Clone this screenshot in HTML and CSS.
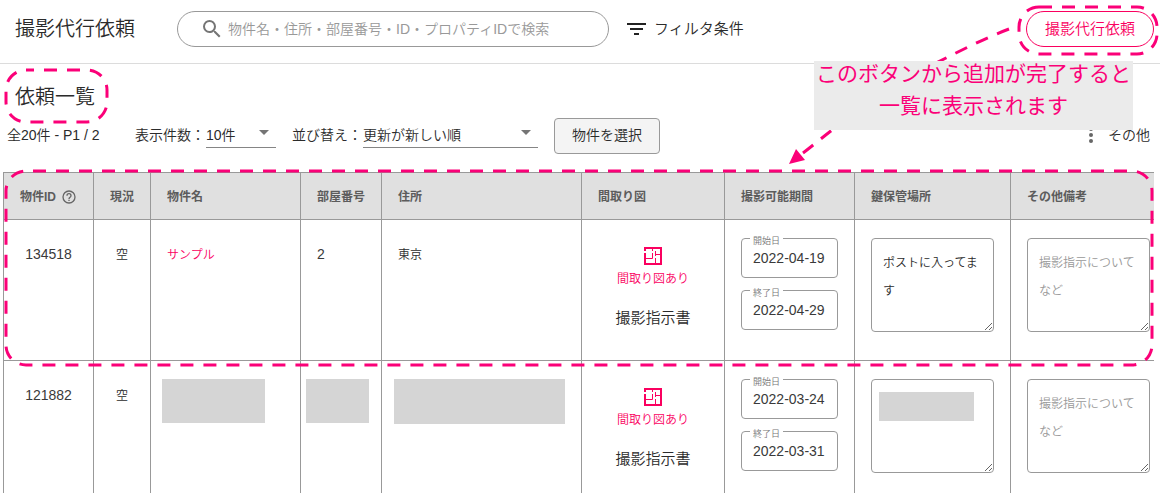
FILE: index.html
```html
<!DOCTYPE html>
<html lang="ja">
<head>
<meta charset="utf-8">
<meta name="viewport" content="width=device-width, initial-scale=1">
<title>撮影代行依頼</title>
<link rel="stylesheet" href="styles.css">
</head>
<body>
<div class="page">
  <header class="topbar">
    <h1 class="title">撮影代行依頼</h1>
    <div class="search">
      <svg class="search-icon" viewBox="0 0 24 24" aria-hidden="true"><path d="M15.5 14h-.79l-.28-.27A6.47 6.47 0 0 0 16 9.5 6.5 6.5 0 1 0 9.500 16c1.610 0 3.090-.59 4.230-1.570l.27.28v.79l5 4.990L20.490 19l-4.990-5zm-6 0C7.010 14 5 11.990 5 9.500S7.010 5 9.500 5 14 7.010 14 9.500 11.990 14 9.500 14z"/></svg>
      <input class="search-input" type="text" aria-label="検索" placeholder="物件名・住所・部屋番号・ID・プロパティIDで検索">
    </div>
    <button class="filter" type="button">
      <svg class="filter-icon" viewBox="0 0 20 12" aria-hidden="true"><path d="M0 0h19v2H0zM3 5h13v2H3zM7 10h5v2H7z"/></svg>
      フィルタ条件
    </button>
    <div class="request">
      <button class="request-button" type="button">撮影代行依頼</button>
      <svg class="frame frame-request" aria-hidden="true"><rect width="100%" height="100%" rx="20"/></svg>
    </div>
  </header>

  <main>
    <div class="heading">
      <h2 class="subtitle">依頼一覧</h2>
      <svg class="frame frame-heading" aria-hidden="true"><rect width="100%" height="100%" rx="20"/></svg>
    </div>

    <div class="toolbar">
      <span class="count">全20件 - P1 / 2</span>
      <div class="picker">
        <label for="per-page">表示件数：</label>
        <span class="select-wrap">
          <select id="per-page" class="select select-short"><option>10件</option></select>
          <svg class="caret" viewBox="0 0 10 5" aria-hidden="true"><path d="M0 0h10L5 5z"/></svg>
        </span>
      </div>
      <div class="picker">
        <label for="sort">並び替え：</label>
        <span class="select-wrap">
          <select id="sort" class="select select-long"><option>更新が新しい順</option></select>
          <svg class="caret" viewBox="0 0 10 5" aria-hidden="true"><path d="M0 0h10L5 5z"/></svg>
        </span>
      </div>
      <button class="choose" type="button">物件を選択</button>
      <button class="more" type="button">
        <svg class="dots" viewBox="0 0 4 16" aria-hidden="true"><circle cx="2" cy="2" r="2"/><circle cx="2" cy="8" r="2"/><circle cx="2" cy="14" r="2"/></svg>
        その他
      </button>
    </div>

    <div class="table-wrap">
      <table class="list">
        <colgroup>
          <col class="c-id"><col class="c-state"><col class="c-name"><col class="c-room"><col class="c-address"><col class="c-plan"><col class="c-period"><col class="c-key"><col class="c-note">
        </colgroup>
        <thead>
          <tr>
            <th><span class="id-head">物件ID <svg class="help" viewBox="0 0 24 24" aria-hidden="true"><path d="M11 18h2v-2h-2v2zm1-16a10 10 0 1 0 0 20 10 10 0 0 0 0-20zm0 18a8 8 0 1 1 0-16 8 8 0 0 1 0 16zm0-14a4 4 0 0 0-4 4h2a2 2 0 1 1 4 0c0 2-3 1.750-3 5h2c0-2.250 3-2.500 3-5a4 4 0 0 0-4-4z"/></svg></span></th>
            <th>現況</th><th>物件名</th><th>部屋番号</th><th>住所</th><th>間取り図</th><th>撮影可能期間</th><th>鍵保管場所</th><th>その他備考</th>
          </tr>
        </thead>
        <tbody>
          <tr>
            <td class="center number">134518</td>
            <td class="center">空</td>
            <td><a class="link" href="#sample">サンプル</a></td>
            <td class="number">2</td>
            <td>東京</td>
            <td class="plan">
              <a class="plan-link" href="#plan-1">
                <svg class="plan-icon" viewBox="0 0 18 18" aria-hidden="true"><path class="wall" d="M1 4V1h16v16H1V6"/><path class="room" d="M8.500 2v2M8.500 6v5.500H2M11.500 4v5M11.500 7.500H16M11.500 11v5"/></svg>
                間取り図あり
              </a>
              <button class="sheet" type="button">撮影指示書</button>
            </td>
            <td class="controls">
              <div class="period">
                <div class="field"><label for="start-1">開始日</label><input id="start-1" type="text" value="2022-04-19"></div>
                <div class="field"><label for="end-1">終了日</label><input id="end-1" type="text" value="2022-04-29"></div>
              </div>
            </td>
            <td class="controls"><textarea class="memo" aria-label="鍵保管場所">ポストに入ってます</textarea></td>
            <td class="controls"><textarea class="memo" aria-label="その他備考" placeholder="撮影指示についてなど"></textarea></td>
          </tr>
          <tr>
            <td class="center number">121882</td>
            <td class="center">空</td>
            <td class="masked masked-name"><div class="mask mask-name"></div></td>
            <td class="masked masked-room"><div class="mask mask-room"></div></td>
            <td class="masked masked-address"><div class="mask mask-address"></div></td>
            <td class="plan">
              <a class="plan-link" href="#plan-2">
                <svg class="plan-icon" viewBox="0 0 18 18" aria-hidden="true"><path class="wall" d="M1 4V1h16v16H1V6"/><path class="room" d="M8.500 2v2M8.500 6v5.500H2M11.500 4v5M11.500 7.500H16M11.500 11v5"/></svg>
                間取り図あり
              </a>
              <button class="sheet" type="button">撮影指示書</button>
            </td>
            <td class="controls">
              <div class="period">
                <div class="field"><label for="start-2">開始日</label><input id="start-2" type="text" value="2022-03-24"></div>
                <div class="field"><label for="end-2">終了日</label><input id="end-2" type="text" value="2022-03-31"></div>
              </div>
            </td>
            <td class="controls">
              <div class="memo-wrap">
                <textarea class="memo" aria-label="鍵保管場所"></textarea>
                <div class="mask mask-memo"></div>
              </div>
            </td>
            <td class="controls"><textarea class="memo" aria-label="その他備考" placeholder="撮影指示についてなど"></textarea></td>
          </tr>
        </tbody>
      </table>
      <svg class="frame frame-table" aria-hidden="true"><rect width="100%" height="100%" rx="20"/></svg>
    </div>
  </main>

  <svg class="arrow" viewBox="0 0 240 150" aria-hidden="true">
    <path class="arrow-line" d="M229 9C205 18 180 31 150 46"/>
    <path class="arrow-line" d="M23 133C35 124 45 115 60 104"/>
    <path class="arrow-head" d="M9 144l7-15 9 11z"/>
  </svg>
  <p class="callout"><span>このボタンから追加が完了すると</span><span>一覧に表示されます</span></p>
</div>
</body>
</html>
```

FILE: styles.css
```css
:root {
  --brand: #fa005f;
  --note: #fb0078;
  --line: #999;
  --text: #2b2b2b;
}

* {
  box-sizing: border-box;
}

body {
  margin: 0;
  background: #fff;
  color: var(--text);
  font: 350 14px/20px "Liberation Sans", "Noto Sans CJK JP", sans-serif;
}

button,
input,
select,
textarea {
  margin: 0;
  color: inherit;
  font: inherit;
}

button {
  padding: 0;
  border: 0;
  background: none;
  cursor: pointer;
}

.page {
  position: relative;
  height: 100vh;
  overflow: hidden;
}

.topbar {
  display: flex;
  align-items: center;
  padding: 11px 6px 16px 15px;
  border-bottom: 1px solid #dcdcdc;
}

.title,
.subtitle {
  margin: 0;
  font-size: 20px;
  font-weight: 350;
  line-height: 32px;
  white-space: nowrap;
}

.search {
  display: flex;
  flex: 0 1 432px;
  align-items: center;
  gap: 4px;
  height: 36px;
  margin-left: 42px;
  padding: 0 22px;
  border: 1px solid var(--line);
  border-radius: 18px;
}

.search-icon {
  flex: none;
  width: 24px;
  height: 24px;
  fill: #757575;
}

.search-input {
  flex: 1;
  min-width: 0;
  padding: 0;
  border: 0;
  outline: 0;
  background: none;
}

::placeholder {
  color: #999;
  opacity: 1;
}

.filter {
  display: flex;
  align-items: center;
  gap: 7px;
  margin-left: 18px;
  font-size: 15px;
  white-space: nowrap;
}

.filter-icon {
  width: 20px;
  height: 12px;
  fill: #222;
}

.request {
  position: relative;
  margin-left: auto;
}

.request-button {
  display: block;
  height: 36px;
  padding: 0 18px;
  border: 1px solid var(--brand);
  border-radius: 18px;
  color: var(--brand);
  font-size: 15px;
  white-space: nowrap;
}

/* Dashed highlight frames */
.frame {
  position: absolute;
  overflow: visible;
  pointer-events: none;
}

.frame rect {
  fill: none;
  stroke: var(--note);
  stroke-width: 3;
  stroke-dasharray: 13 10;
}

.frame-request {
  top: -4px;
  left: -7px;
  width: 138px;
  height: 47px;
}

.frame-heading {
  top: -11px;
  left: -9px;
  width: 101px;
  height: 52px;
  stroke-dashoffset: 5;
}

.frame-table {
  top: -1px;
  left: 3px;
  width: calc(100% - 5px);
  height: 194px;
  stroke-dashoffset: -7;
}

.heading {
  position: relative;
  width: max-content;
  margin: 17px 15px 5px;
}

.toolbar {
  display: flex;
  align-items: center;
  gap: 16px;
  margin: 0 10px 18px 7px;
  white-space: nowrap;
}

.count {
  min-width: 108px;
  margin-right: 4px;
  padding-bottom: 2px;
}

.picker {
  display: flex;
  align-items: center;
  gap: 1px;
  padding-bottom: 2px;
}

.select-wrap {
  position: relative;
  display: block;
}

.select {
  display: block;
  height: 26px;
  padding: 0 24px 0 0;
  border: 0;
  border-bottom: 1px solid #858585;
  border-radius: 0;
  background: none;
  appearance: none;
}

.select-short {
  width: 70px;
}

.select-long {
  width: 175px;
}

.caret {
  position: absolute;
  top: 8px;
  right: 7px;
  width: 10px;
  height: 5px;
  fill: #757575;
  pointer-events: none;
}

.choose {
  height: 36px;
  padding: 0 17px 2px;
  border: 1px solid var(--line);
  border-radius: 4px;
  background: #f4f4f4;
}

.more {
  display: flex;
  align-items: center;
  gap: 15px;
  margin-left: auto;
  padding-bottom: 2px;
}

.dots {
  width: 4px;
  height: 16px;
  fill: #666;
}

.table-wrap {
  position: relative;
  margin: 0 6px 0 3px;
}

.list {
  width: 100%;
  border-top: 1px solid var(--line);
  border-spacing: 0;
  table-layout: fixed;
  font-size: 12px;
  line-height: 18px;
}

.c-id { width: 90px; }
.c-state { width: 57px; }
.c-name { width: 150px; }
.c-room { width: 81px; }
.c-address { width: 200px; }
.c-plan { width: 143px; }
.c-period { width: 130px; }
.c-key { width: 156px; }

.list th,
.list td {
  padding: 0 0 0 16px;
  border-bottom: 1px solid var(--line);
  border-left: 1px solid var(--line);
  text-align: left;
}

.list th {
  height: 47px;
  padding-top: 2px;
  background: #e0e0e0;
  color: #5c5c5c;
  font-weight: 700;
  white-space: nowrap;
}

.list td {
  height: 141px;
  padding-top: 26px;
  vertical-align: top;
}

.id-head {
  display: flex;
  align-items: center;
  gap: 5px;
}

.help {
  width: 16px;
  height: 16px;
  fill: #666;
}

.list .center {
  padding-left: 0;
  text-align: center;
}

.list .number {
  color: #3a3a3a;
  font-size: 14px;
  line-height: 16px;
}

.link,
.plan-link {
  color: var(--brand);
  text-decoration: none;
}

.list .plan {
  padding-left: 0;
  text-align: center;
}

.plan-link {
  display: block;
  padding-top: 1px;
}

.plan-icon {
  display: block;
  width: 18px;
  height: 18px;
  margin: 0 auto 5px;
  fill: none;
  stroke: var(--brand);
}

.wall {
  stroke-width: 2;
}

.room {
  stroke-width: 1;
}

.sheet {
  margin-top: 21px;
  font-size: 15px;
}

.list .controls {
  padding-top: 18px;
}

.period {
  display: grid;
  gap: 12px;
  width: 97px;
}

.field {
  position: relative;
}

.field label {
  position: absolute;
  top: -3px;
  left: 9px;
  padding: 0 3px;
  background: #fff;
  color: #757575;
  font-size: 9px;
  line-height: 12px;
}

.field input {
  display: block;
  width: 100%;
  height: 40px;
  padding: 0 11px;
  border: 1px solid var(--line);
  border-radius: 4px;
  color: #3a3a3a;
  font-size: 14px;
}

.memo-wrap {
  position: relative;
}

.memo {
  display: block;
  width: 123px;
  height: 94px;
  padding: 10px 11px;
  border: 1px solid var(--line);
  border-radius: 4px;
  line-height: 28px;
  overflow: hidden;
}

.mask {
  background: #d5d5d5;
}

.list .masked {
  padding-top: 18px;
}

.list .masked-name {
  padding-left: 11px;
}

.list .masked-address {
  padding-left: 12px;
}

.list .masked-room {
  padding-left: 5px;
}

.mask-name {
  width: 103px;
  height: 44px;
}

.mask-room {
  width: 63px;
  height: 44px;
}

.mask-address {
  width: 171px;
  height: 45px;
}

.mask-memo {
  position: absolute;
  top: 13px;
  left: 8px;
  width: 95px;
  height: 29px;
}

/* Callout and its arrow */
.arrow {
  position: absolute;
  top: 20px;
  right: 140px;
  width: 240px;
  height: 150px;
  pointer-events: none;
}

.arrow-line {
  fill: none;
  stroke: var(--note);
  stroke-width: 3;
  stroke-dasharray: 13 10;
}

.arrow-head {
  fill: var(--note);
}

.callout {
  display: grid;
  align-content: start;
  gap: 8px;
  position: absolute;
  top: 61px;
  right: 27px;
  width: 319px;
  height: 69px;
  margin: 0;
  padding-top: 1px;
  background: #ebebeb;
  color: var(--note);
  font-size: 21px;
  font-weight: 400;
  line-height: 24px;
  text-align: center;
  white-space: nowrap;
}
```
